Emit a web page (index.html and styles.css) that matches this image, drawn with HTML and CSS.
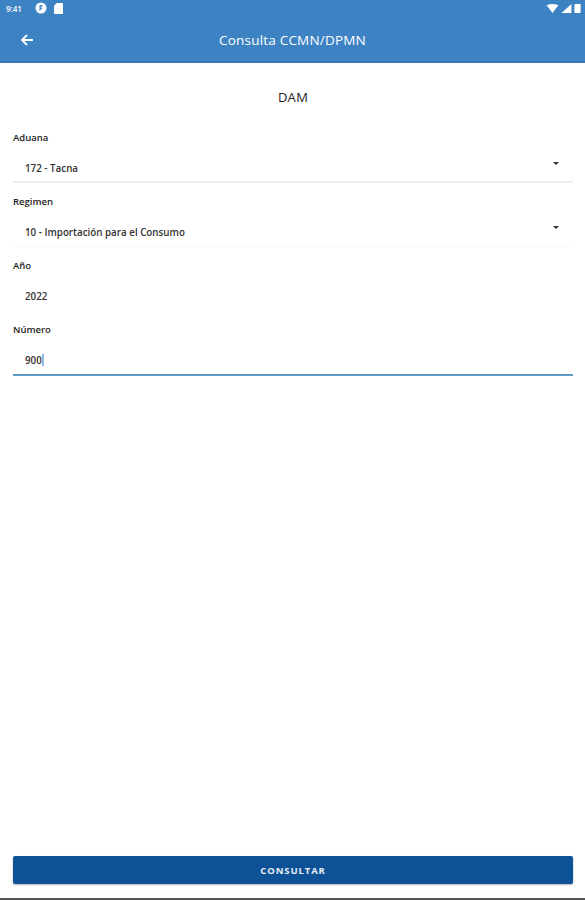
FILE: index.html
```html
<!DOCTYPE html>
<html lang="es">
<head>
    <meta charset="UTF-8" />
    <title>Consulta CCMN/DPMN</title>
    <link rel="stylesheet" href="styles.css">
</head>
<body>
    <div class="app">
        <header class="appbar">
            <div class="status">
                <div class="status-left">
                    <span class="clock">9:41</span>
                    <svg class="status-icon" width="12" height="12" viewBox="0 0 12 12"><circle cx="6" cy="6" r="5.5" fill="#fff"/><path d="M4.5 3h3v1.5h-2v1h1.6v1.4H5.5V9h-1z" fill="#3d83c3"/></svg>
                    <svg class="status-icon" width="9" height="11" viewBox="0 0 10 12"><path d="M3 0h6a1 1 0 0 1 1 1v10a1 1 0 0 1-1 1H1a1 1 0 0 1-1-1V3z" fill="#fff"/></svg>
                </div>
                <div class="status-right">
                    <svg width="13" height="9" viewBox="0 0 13 10"><path d="M0 1.5Q6.5-1.5 13 1.5L6.5 10z" fill="#fff"/></svg>
                    <svg width="11" height="9" viewBox="0 0 11 10"><path d="M11 0v10H0z" fill="#fff"/></svg>
                    <svg width="7" height="9" viewBox="0 0 7 10"><rect width="7" height="10" rx="1" fill="#fff"/></svg>
                </div>
            </div>
            <div class="toolbar">
                <svg class="back" width="14" height="14" viewBox="0 0 14 14"><path d="M13 7H2.5M7 2 2 7l5 5" fill="none" stroke="#fff" stroke-width="1.8"/></svg>
                <h1>Consulta CCMN/DPMN</h1>
            </div>
        </header>

        <main class="content">
            <h2>DAM</h2>
            <form class="form">
                <div class="field">
                    <label>Aduana</label>
                    <div class="value select line-grey">172 - Tacna<span class="caret"></span></div>
                </div>
                <div class="field">
                    <label>Regimen</label>
                    <div class="value select line-faint">10 - Importación para el Consumo<span class="caret"></span></div>
                </div>
                <div class="field">
                    <label>Año</label>
                    <div class="value line-none">2022</div>
                </div>
                <div class="field">
                    <label>Número</label>
                    <div class="value line-active">900<span class="cursor"></span></div>
                </div>
            </form>
            <button class="submit" type="button">CONSULTAR</button>
        </main>
        <div class="bottom-edge"></div>
    </div>
</body>
</html>
```

FILE: styles.css
```css
* {
    box-sizing: border-box;
    margin: 0;
    padding: 0;
}

body {
    font-family: 'Open Sans', 'Noto Sans', sans-serif;
    background: #fff;
    color: #222;
}

.app {
    height: 900px;
    display: flex;
    flex-direction: column;
}

.appbar {
    height: 63px;
    background: #3d83c3;
    border-bottom: 2px solid #3576b3;
    color: #fff;
    flex-shrink: 0;
}

.status {
    height: 16px;
    padding: 0 4px 0 6px;
    display: flex;
    justify-content: space-between;
    align-items: center;
}

.status-left,
.status-right {
    display: flex;
    align-items: center;
}

.status-right {
    gap: 2px;
}

.clock {
    font-size: 8px;
    font-weight: 600;
    width: 29px;
}

.status-icon {
    margin-right: 7px;
}

.toolbar {
    height: 47px;
    display: flex;
    align-items: center;
    position: relative;
    padding-left: 20px;
}

.toolbar h1 {
    flex: 1;
    padding-right: 34px;
    text-align: center;
    font-size: 13.5px;
    font-weight: 400;
    letter-spacing: 0.2px;
}

.content {
    flex: 1;
    display: flex;
    flex-direction: column;
    padding: 0 12px 14px 13px;
}

.content h2 {
    margin-top: 24px;
    font-size: 13px;
    font-weight: 400;
    line-height: 20px;
    text-align: center;
    letter-spacing: 0.3px;
}

.form {
    margin-top: 20px;
    flex: 1;
}

.field {
    height: 64px;
}

.field label {
    display: block;
    height: 32px;
    padding-top: 4px;
    font-size: 9.5px;
    font-weight: 600;
    line-height: 14px;
}

.value {
    position: relative;
    height: 24px;
    padding: 0 0 0 12px;
    font-size: 9.8px;
    line-height: 20px;
    font-weight: 600;
    color: #333;
}

.line-grey {
    border-bottom: 2px solid #eee;
}

.line-faint {
    border-bottom: 1px solid #f7f7f7;
}

.line-none {
    border-bottom: 0;
}

.line-active {
    height: 25px;
    border-bottom: 2px solid #5b9ac6;
}

.caret {
    position: absolute;
    right: 14px;
    top: 3px;
    border-left: 3px solid transparent;
    border-right: 3px solid transparent;
    border-top: 3px solid #333;
}

.cursor {
    display: inline-block;
    width: 2px;
    height: 12px;
    vertical-align: -2px;
    background: #8fbce0;
}

.submit {
    height: 28px;
    width: 100%;
    flex-shrink: 0;
    background: #0d5296;
    color: #e8eef5;
    border: none;
    border-radius: 2px;
    font-family: inherit;
    font-size: 9.5px;
    font-weight: 700;
    letter-spacing: 0.9px;
    box-shadow: 0 1px 2px rgba(0, 0, 0, 0.3);
}

.bottom-edge {
    height: 2px;
    background: #555;
    flex-shrink: 0;
}
```
